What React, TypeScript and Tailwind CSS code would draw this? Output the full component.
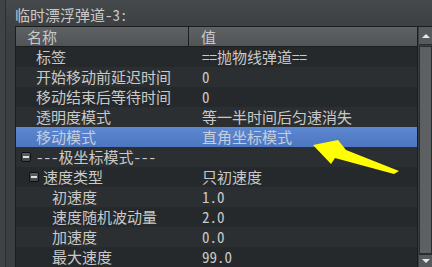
import React from 'react';

type Row = {
  name: string;
  value: string;
  indent: number;
  box?: number;
  selected?: boolean;
};

const rows: Row[] = [
  { name: '标签', value: '==抛物线弹道==', indent: 36 },
  { name: '开始移动前延迟时间', value: '0', indent: 36 },
  { name: '移动结束后等待时间', value: '0', indent: 36 },
  { name: '透明度模式', value: '等一半时间后匀速消失', indent: 36 },
  { name: '移动模式', value: '直角坐标模式', indent: 36, selected: true },
  { name: '---极坐标模式---', value: '', indent: 36, box: 21 },
  { name: '速度类型', value: '只初速度', indent: 43, box: 29 },
  { name: '初速度', value: '1.0', indent: 52 },
  { name: '速度随机波动量', value: '2.0', indent: 52 },
  { name: '加速度', value: '0.0', indent: 52 },
  { name: '最大速度', value: '99.0', indent: 52 },
];

const font = { fontFamily: '"Noto Sans Mono CJK SC", "Noto Sans CJK SC", "DejaVu Sans Mono", monospace' };

// small collapse box drawn in front of group rows
const MinusBox = ({ left }: { left: number }) => (
  <span
    className="absolute z-10 top-[5px] w-[10px] h-[10px] rounded-[2px] border border-[#0f1011] bg-gradient-to-b from-[#5a5e61] to-[#44474a] flex items-center justify-center"
    style={{ left: left - 16 }}
  >
    <span className="block w-[6px] h-[2px] bg-[#e0e0e0]" />
  </span>
);

const App = () => {
  return (
    <div
      className="relative w-[432px] h-[267px] overflow-hidden flex bg-[#3c3f41] text-[15px] text-[#c9c9c9]"
      style={font}
    >
      <div className="w-[5px] shrink-0 bg-[#404345]" />
      <div className="w-[1px] shrink-0 bg-[#2c2e30]" />
      <div className="flex-1 flex flex-col pl-[9px] bg-gradient-to-b from-[#474a4d] via-[#3f4244] to-[#3c3f41] bg-[length:100%_40px] bg-no-repeat">
        <div className="h-[30px] flex items-end pb-[1px] leading-[20px]">临时漂浮弹道-3:</div>
        <div className="flex flex-1 border-t border-[#1b1d1e]">
          <div className="flex-1 flex flex-col border-l border-r border-[#1b1d1e]">
            <div className="h-[20px] flex shrink-0 border-b border-[#1b1d1e] bg-gradient-to-b from-[#5e6265] to-[#505457] leading-[19px]">
              <div className="w-[173px] pl-[11px] border-r border-[#1b1d1e]">名称</div>
              <div className="pl-[12px]">值</div>
            </div>
            {rows.map((r, i) => (
              <div
                key={i}
                className={
                  'relative h-[20px] flex shrink-0 leading-[20px] ' +
                  (r.selected
                    ? 'bg-gradient-to-b from-[#5d88d2] to-[#4c76bf] text-[#c4cede]'
                    : i % 2 === 0
                    ? 'bg-[#26292b]'
                    : 'bg-[#2c2f31]')
                }
              >
                {r.box !== undefined && <MinusBox left={r.box} />}
                <div className="w-[174px] whitespace-nowrap" style={{ paddingLeft: r.indent - 16 }}>
                  {r.name}
                </div>
                <div className="pl-[12px] whitespace-nowrap">{r.value}</div>
              </div>
            ))}
          </div>
          <div className="w-[14px] shrink-0 flex flex-col bg-[#3c3f41] pl-[1px]">
            <div className="h-[18px] shrink-0 bg-[#565a5d] border-b border-[#2a2c2e] flex items-center justify-center">
              <span className="block w-0 h-0 border-l-[4px] border-r-[4px] border-b-[4px] border-l-transparent border-r-transparent border-b-[#e8e8e8]" />
            </div>
            <div className="flex-1 mt-[1px] bg-[#5d6063] border border-[#2a2c2e]" />
            <div className="h-[13px] shrink-0 bg-[#565a5d] border-t border-[#2a2c2e] flex items-center justify-center">
              <span className="block w-0 h-0 border-l-[4px] border-r-[4px] border-t-[4px] border-l-transparent border-r-transparent border-t-[#e8e8e8]" />
            </div>
          </div>
        </div>
      </div>
      <svg className="absolute left-0 top-0" width="432" height="267" viewBox="0 0 432 267">
        <polygon
          points="313,145 338,140 346,150 399,171 394,174 335,158 331,164"
          fill="#ffff00"
        />
      </svg>
    </div>
  );
};

export default App;
